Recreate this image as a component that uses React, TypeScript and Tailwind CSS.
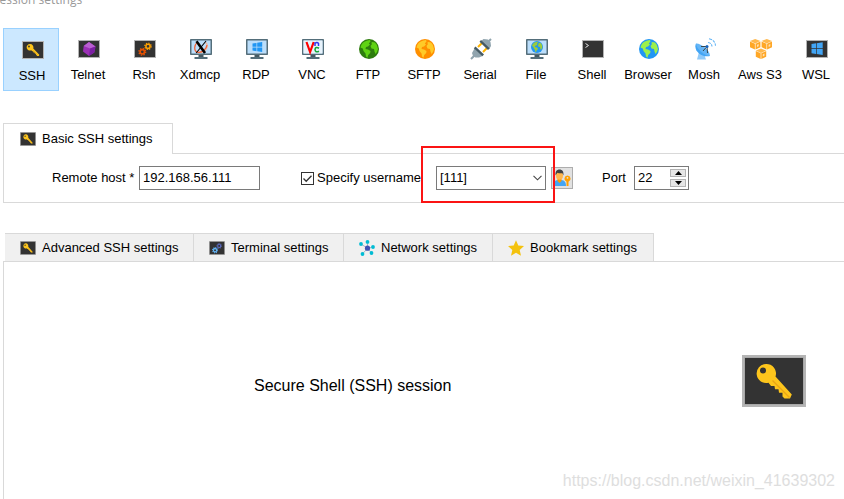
import { useState, type ReactNode } from "react";

const frameClass = "h-[18px] w-[22px]";

/** Dark screen with a grey bezel, shared by the terminal-like sessions */
function DarkFrame({
  children,
  className = frameClass,
}: {
  children?: ReactNode;
  className?: string;
}) {
  return (
    <svg viewBox="0 0 22 18" preserveAspectRatio="none" className={className} aria-hidden="true">
      <rect width="22" height="18" fill="#b4b4b4" />
      <rect x="1" y="1" width="20" height="16" fill="#333333" />
      {children}
    </svg>
  );
}

function KeyShape() {
  return (
    <g>
      <path
        fill="#fdc51c"
        fillRule="evenodd"
        d="M8 3a3.400 3.400 0 0 1 3.300 4.500l6 6.200-.3 1.200h-1.800l-1.100-1.100-.3-1.100-1-.1-.2-1.100-1.200-.1-.2-1.100-1-.1-.9-.9A3.300 3.300 0 1 1 8 3ZM7 4.600a.9.9 0 1 0 0 1.800.9.900 0 0 0 0-1.800Z"
      />
      <path d="m10.800 9 5.900 5.700" stroke="#eba516" strokeWidth=".5" />
    </g>
  );
}

function KeyIcon({ className }: { className?: string }) {
  return (
    <DarkFrame className={className}>
      <KeyShape />
    </DarkFrame>
  );
}

/** Large key of the session panel, with a two-tone bezel */
function BigKey() {
  return (
    <svg viewBox="0 0 64 52" className="h-[52px] w-16 shrink-0" aria-hidden="true">
      <rect width="64" height="52" fill="#b5b5b5" />
      <rect x="2.5" y="2.5" width="59" height="47" fill="#999" />
      <rect x="3" y="3" width="58" height="46" fill="#333" />
      <path
        fill="#fdc51c"
        fillRule="evenodd"
        d="M24 9a9.500 9.500 0 0 1 9.500 12.500L49.800 39.500 48 43.500H42.500L40.500 41.500V37.800H37L36.500 34.300H33L32.500 31H29L26.500 27.700A9.500 9.500 0 1 1 24 9ZM21 12.500a3 3 0 1 0 0 6 3 3 0 0 0 0-6Z"
      />
      <path d="M30.500 25.500 47.500 42.500" stroke="#eba516" strokeWidth="1.300" />
    </svg>
  );
}

function Gears({ a, b }: { a: string; b: string }) {
  return (
    <g fill="none">
      <circle cx="8.300" cy="11.800" r="2.200" stroke={a} strokeWidth="1.700" />
      <circle cx="8.300" cy="11.800" r="3.400" stroke={a} strokeWidth="1.300" strokeDasharray="1.350 1.320" />
      <circle cx="14" cy="6.300" r="2.100" stroke={b} strokeWidth="1.500" />
      <circle cx="14" cy="6.300" r="3.200" stroke={b} strokeWidth="1.200" strokeDasharray="1.260 1.253" />
    </g>
  );
}

function Monitor({ children }: { children: ReactNode }) {
  return (
    <svg viewBox="0 0 22 20" className="h-5 w-[22px]" aria-hidden="true">
      <path fill="#455a64" d="M8.500 15h5v3h-5z" />
      <path fill="#546e7a" d="M4.500 18h13v2h-13z" />
      <rect width="22" height="16" rx=".8" fill="#546e7a" />
      <rect x="1.500" y="1.500" width="19" height="13" fill="#bbdefb" />
      {children}
    </svg>
  );
}

function Globe({ sea, land }: { sea: string; land: string }) {
  return (
    <svg viewBox="0 0 20 20" className="size-5" aria-hidden="true">
      <GlobeShape sea={sea} land={land} />
    </svg>
  );
}

function GlobeShape({ sea, land }: { sea: string; land: string }) {
  return (
    <g>
      <circle cx="10" cy="10" r="10" fill={sea} />
      <path
        fill={land}
        d="M8.500 1.500 11 1l.5 1.500L9.800 4.500 11 5.500 9 7.500 7 8 6.500 10 9 10.500l2.500 1.500-.3 2-2 2-.7 2.700L7 17.500l-.5-3L4.500 12l-.7-2.500L1.500 8.500A9 9 0 0 1 8.500 1.500ZM13 3l3 .5a9 9 0 0 1 3 6.500l-1 3-1.500 2-1-2.500-.5-2.500-2.500-.5-1-2.500 1.500-2L12.300 4Z"
      />
    </g>
  );
}

function TelnetIcon() {
  return (
    <DarkFrame>
      <path fill="#9b30b5" d="m11 2 6.500 4.500-1.200 6L11 16l-6-4.500L5.700 6Z" />
      <path fill="#ba5fd0" d="m11 2-5.300 4 6.300 2.500 5.500-2Z" />
      <path fill="#7b1fa2" d="m12 8.500 5.500-2-1.200 6L11 16Z" />
    </DarkFrame>
  );
}

function XdmcpIcon() {
  return (
    <Monitor>
      <path d="M15.500 3.500C20 7 15 14 8 13.500" fill="none" stroke="#f4b59d" strokeWidth="1.300" />
      <path d="M8 3.500C4 5 3.500 12 7.500 13.200c4 1 9-3 9.500-7" fill="none" stroke="#f0653a" strokeWidth="1.300" />
      <path d="m6.500 2.300 8.500 11.700" stroke="#000" strokeWidth="2.600" />
      <path d="m16 2-9.800 12" stroke="#000" strokeWidth="1.100" />
    </Monitor>
  );
}

function WindowsShape() {
  return (
    <path
      fill="#2196f3"
      d="m6.500 4.500 4-.6v3.800h-4zm4.700-.7 5-.8v4.700h-5zM6.500 8.400h4v3.800l-4-.6zm4.700 0h5V13l-5-.7z"
    />
  );
}

function VncIcon() {
  return (
    <Monitor>
      <rect x="1.500" y="1.500" width="19" height="13" fill="#e8f3fc" />
      <path d="m4.500 3 3.600 10 3.600-10" fill="none" stroke="#f00" strokeWidth="2.200" />
      <path d="M13 7V3.300M13 4.500q2-2 3.500 0V7" fill="none" stroke="#3535ee" strokeWidth="1.500" />
      <path d="M17 9.300q-3.500-2-4 1.200.3 3.500 4 1.700" fill="none" stroke="#16a83a" strokeWidth="1.600" />
    </Monitor>
  );
}

function SerialIcon() {
  return (
    <svg viewBox="0 0 22 22" className="h-[22px] w-[22px]" aria-hidden="true">
      <path d="m8 9 4-4M13 14l4-4" stroke="#ffb300" strokeWidth="2" />
      <path d="m1 21 4-4M18 4l3-3" stroke="#90a4ae" strokeWidth="2" />
      <path fill="#90a4ae" d="m4.500 10.500 8 7.500-3.500 1.500H5.500L3 18l-1-3ZM10.500 3.500l3-2.500 4.500.5 2.500 2.500.5 4-2 3.500Z" />
      <path fill="#455a64" d="m5.500 8.500 8.500 8-1.700 1.700L3.800 10.200ZM11 2l8.700 8.300-1.700 1.700L9.500 3.800Z" />
    </svg>
  );
}

function MoshIcon() {
  return (
    <svg viewBox="0 0 22 22" className="h-[22px] w-[22px]" aria-hidden="true">
      <path fill="#90caf9" d="M5 14 3 21.500h9L10 16Z" />
      <path fill="#42a5f5" d="M2 5.500C-1 12 7 20 16 18Z" />
      <path fill="#64b5f6" d="M2 5.500C6.500 5 16 12 16 18 11 18 2 11 2 5.500Z" />
      <path d="m9 13 4-4.500M7 8.500l6 0 .5 6.500" fill="none" stroke="#37474f" strokeWidth="1" />
      <circle cx="13" cy="8.500" r="1.500" fill="#1565c0" />
      <path d="M14 4.500q3.500.3 4 4M15 .8q6 1 6.500 7" fill="none" stroke="#64b5f6" strokeWidth="1.100" strokeDasharray="3 1" />
    </svg>
  );
}

function Cube({ x, y }: { x: number; y: number }) {
  return (
    <g transform={`translate(${x} ${y})`}>
      <path fill="#ffb84d" d="m5.200 0 5.200 2-5.200 2.400L0 2Z" />
      <path fill="#ffa726" d="M0 2.500 4.900 4.800v5.700L0 8.200ZM10.400 2.500 5.500 4.800v5.700l4.900-2.300Z" />
      <path fill="#ffe0b2" d="m7 5.700 1.700-.8v2.300l-1.700.8Z" />
    </g>
  );
}

function AwsIcon() {
  return (
    <svg viewBox="0 0 22 20" className="h-5 w-[22px]" aria-hidden="true">
      <Cube x={0} y={0} />
      <Cube x={11.600} y={0} />
      <Cube x={5.800} y={9.500} />
    </svg>
  );
}

function NetworkIcon() {
  const nodes = [
    [2, 4],
    [8.5, 1.9],
    [14, 7],
    [12.5, 13],
    [3.5, 14],
  ];
  return (
    <svg viewBox="0 0 16 16" className="size-4" aria-hidden="true">
      {nodes.map(([x, y]) => (
        <g key={x}>
          <path d={`M8.500 8.200 ${x} ${y}`} stroke="#8fa8b8" strokeWidth=".8" />
          <circle cx={x} cy={y} r="1.900" fill="#00bcd4" />
        </g>
      ))}
      <circle cx="8.500" cy="8.200" r="2.600" fill="#3f51b5" />
    </svg>
  );
}

function StarIcon() {
  return (
    <svg viewBox="0 0 16 16" className="size-4" aria-hidden="true">
      <path fill="#f4c20d" d="m8 .3 2.300 5.200 5.700.6-4.300 3.800 1.300 5.800L8 12.700l-5 3 1.300-5.800L0 6.100l5.700-.6Z" />
    </svg>
  );
}

function UserKeyIcon() {
  return (
    <svg viewBox="0 0 18 18" className="size-[18px]" aria-hidden="true">
      <path fill="#42a5f5" d="M0 17c0-4 2-5.500 4.500-6h4c3 .5 4.500 2 4.500 6Z" />
      <path fill="#ff9800" d="M4.500 9.500h4V12l-2 2-2-2Z" />
      <ellipse cx="6.500" cy="6.500" rx="3.500" ry="4.300" fill="#ffb74d" />
      <path fill="#424242" d="M2.600 6.500C2 2.500 3.800.5 6.500.5s4.500 2 3.900 6l-1-2.300q-3 .5-5-.5L3.500 5Z" />
      <path
        fill="#ffa000"
        fillRule="evenodd"
        d="M14.500 6.500a3.200 3.200 0 0 1 1 6.200V17h-2v-4.300a3.200 3.200 0 0 1 1-6.200Zm0 1.400a.9.900 0 1 0 0 1.800.9.900 0 0 0 0-1.800Z"
      />
    </svg>
  );
}

const sessions: { name: string; icon: ReactNode }[] = [
  { name: "SSH", icon: <KeyIcon /> },
  { name: "Telnet", icon: <TelnetIcon /> },
  { name: "Rsh", icon: <DarkFrame><Gears a="#e65100" b="#ffa000" /></DarkFrame> },
  { name: "Xdmcp", icon: <XdmcpIcon /> },
  { name: "RDP", icon: <Monitor><WindowsShape /></Monitor> },
  { name: "VNC", icon: <VncIcon /> },
  { name: "FTP", icon: <Globe sea="#2e7d0e" land="#5fd313" /> },
  { name: "SFTP", icon: <Globe sea="#ff8f00" land="#ffca28" /> },
  { name: "Serial", icon: <SerialIcon /> },
  {
    name: "File",
    icon: (
      <Monitor>
        <g transform="translate(5 2) scale(.6)">
          <GlobeShape sea="#2196f3" land="#9ccc3c" />
        </g>
      </Monitor>
    ),
  },
  {
    name: "Shell",
    icon: (
      <DarkFrame>
        <path d="m3.500 3.500 3 2-3 2" fill="none" stroke="#e0e0e0" strokeWidth="1" />
      </DarkFrame>
    ),
  },
  { name: "Browser", icon: <Globe sea="#2196f3" land="#9cf04c" /> },
  { name: "Mosh", icon: <MoshIcon /> },
  { name: "Aws S3", icon: <AwsIcon /> },
  {
    name: "WSL",
    icon: (
      <DarkFrame>
        <path
          fill="#42a5f5"
          d="m5.500 4 4.500-.7v5H5.500zm5.200-.8 6-.9v6h-6zM5.500 9H10v5l-4.500-.7zm5.200 0h6v6l-6-.9z"
        />
      </DarkFrame>
    ),
  },
];

const tabs: { name: string; icon: ReactNode; width: string }[] = [
  { name: "Advanced SSH settings", icon: <KeyIcon className="h-3.5 w-4" />, width: "min-w-[189px]" },
  {
    name: "Terminal settings",
    icon: (
      <DarkFrame className="h-3.5 w-4">
        <Gears a="#64b5f6" b="#5c6bc0" />
      </DarkFrame>
    ),
    width: "min-w-[150px]",
  },
  { name: "Network settings", icon: <NetworkIcon />, width: "min-w-[149px]" },
  { name: "Bookmark settings", icon: <StarIcon />, width: "min-w-[161px]" },
];

export default function App() {
  const [session, setSession] = useState("SSH");
  const [host, setHost] = useState("192.168.56.111");
  const [specify, setSpecify] = useState(true);
  const [port, setPort] = useState(22);

  return (
    <div className="relative flex min-h-screen flex-col overflow-hidden bg-white font-['Liberation_Sans',Arial,sans-serif] text-[13px] leading-4 text-black">
      <h1 className="-mt-2 -ml-[7px] h-9 font-['Open_Sans',sans-serif] text-xs text-[#999]">
        Session settings
      </h1>

      <nav className="flex pl-[3px]">
        {sessions.map(({ name, icon }) => (
          <button
            key={name}
            type="button"
            onClick={() => setSession(name)}
            className={`flex h-[63px] w-14 shrink-0 flex-col items-center border whitespace-nowrap ${
              session === name ? "border-[#99d1ff] bg-[#cce8ff] pt-2.5" : "border-transparent pt-[9px]"
            }`}
          >
            <span className="flex h-[22px] items-center pl-1">{icon}</span>
            <span className="mt-[7px] pl-0.5">{name}</span>
          </button>
        ))}
      </nav>

      <section className="mt-8 ml-[3px]">
        <div className="flex">
          <button
            type="button"
            className="-mb-px flex h-[31px] w-[170px] items-center gap-1.5 border border-b-0 border-[#d9d9d9] bg-white pl-4"
          >
            <KeyIcon className="h-3.5 w-4" />
            Basic SSH settings
          </button>
        </div>
        <div className="flex h-[50px] items-center border-y border-l border-[#d9d9d9] pl-12 whitespace-nowrap">
          <label htmlFor="host" className="w-[87px]">
            Remote host *
          </label>
          <input
            id="host"
            value={host}
            onChange={(e) => setHost(e.target.value)}
            className="h-6 w-[121px] border border-[#7a7a7a] px-[3px] pb-0.5 outline-none"
          />
          <label className="ml-[41px] flex w-[135px] items-center gap-[3px]">
            <span className="grid size-[13px] shrink-0">
              <input
                type="checkbox"
                checked={specify}
                onChange={(e) => setSpecify(e.target.checked)}
                className="col-start-1 row-start-1 size-[13px] appearance-none border border-[#333]"
              />
              {specify && (
                <svg viewBox="0 0 13 13" className="pointer-events-none col-start-1 row-start-1 size-[13px]">
                  <path d="m2.500 6.500 2.700 2.800 5.300-5.600" fill="none" stroke="#333" strokeWidth="1.300" />
                </svg>
              )}
            </span>
            Specify username
          </label>
          <span className="grid h-6 w-[110px] shrink-0 items-center">
            <select
              aria-label="Username"
              className="col-start-1 row-start-1 h-6 appearance-none border border-[#7a7a7a] px-[3px] outline-none"
            >
              <option>[111]</option>
            </select>
            <svg
              viewBox="0 0 9 6"
              className="pointer-events-none col-start-1 row-start-1 mr-1 h-1.5 w-[9px] justify-self-end"
            >
              <path d="m.5.800 4 4 4-4" fill="none" stroke="#444" strokeWidth="1.100" />
            </svg>
          </span>
          <button
            type="button"
            aria-label="Manage users"
            className="ml-[5px] flex size-[22px] shrink-0 items-center justify-center border border-[#adadad] bg-[#e1e1e1]"
          >
            <UserKeyIcon />
          </button>
          <label htmlFor="port" className="ml-[29px] w-8">
            Port
          </label>
          <div className="flex h-6 w-[55px] shrink-0 items-center border border-[#7a7a7a] pr-0.5">
            <input
              id="port"
              value={port}
              onChange={(e) => setPort(Number(e.target.value) || 0)}
              className="w-0 grow pl-[3px] outline-none"
            />
            <div className="flex flex-col gap-0.5">
              <button
                type="button"
                aria-label="Increase port"
                onClick={() => setPort(port + 1)}
                className="flex h-2 w-4 items-center justify-center border border-[#b4b4b4] bg-[#e6e6e6]"
              >
                <svg viewBox="0 0 7 4" className="h-1 w-[7px]">
                  <path d="M3.500 0 7 4H0Z" />
                </svg>
              </button>
              <button
                type="button"
                aria-label="Decrease port"
                onClick={() => setPort(port - 1)}
                className="flex h-2 w-4 items-center justify-center border border-[#b4b4b4] bg-[#e6e6e6]"
              >
                <svg viewBox="0 0 7 4" className="h-1 w-[7px]">
                  <path d="M3.500 4 7 0H0Z" />
                </svg>
              </button>
            </div>
          </div>
        </div>
      </section>

      <section className="mt-[30px] ml-[3px] flex grow flex-col">
        <div className="flex pl-0.5">
          {tabs.map(({ name, icon, width }) => (
            <button
              key={name}
              type="button"
              className={`flex h-7 items-center gap-1.5 border-t border-r border-[#d9d9d9] bg-[#f0f0f0] pt-px pl-[15px] whitespace-nowrap ${width}`}
            >
              {icon}
              {name}
            </button>
          ))}
        </div>
        <div className="flex grow items-center justify-between border-t border-l border-[#d9d9d9] pr-[38px] pl-[250px]">
          <p className="pt-2.5 text-base">Secure Shell (SSH) session</p>
          <BigKey />
        </div>
      </section>

      {/* Annotation around the username field */}
      <div className="pointer-events-none absolute top-[146px] left-[421px] h-[57px] w-[134px] border-2 border-[#fb1414]" />

      <p className="absolute right-[9px] bottom-1.5 text-base text-[#dedede]">
        https://blog.csdn.net/weixin_41639302
      </p>
    </div>
  );
}
